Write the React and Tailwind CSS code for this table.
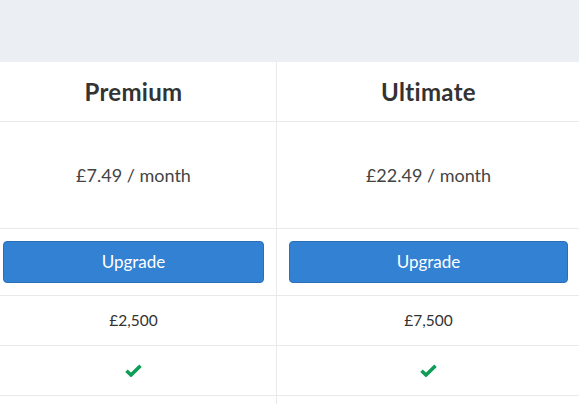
import React from "react";

function Check() {
  return (
    <svg width="17" height="13" viewBox="0 0 17 13" aria-hidden="true">
      <path d="M1.5 6.8 L6 11 L15.5 1.8" fill="none" stroke="#0f9d58" strokeWidth="3.6" strokeLinejoin="miter" />
    </svg>
  );
}

export default function App() {
  const font = { fontFamily: '"Lato", "Liberation Sans", sans-serif' };
  return (
    <div className="w-[579px] h-[404px] overflow-hidden bg-white text-[#333]" style={font}>
      <div className="h-[62px] bg-[#ebeef2]" />
      <div className="ml-[-9px] grid grid-cols-[286px_303px]">
        {/* header */}
        <div className="h-[60px] flex items-center justify-center border-r border-b border-[#e9e9e9] text-[24px] tracking-[0.3px] font-bold text-[#333]">Premium</div>
        <div className="h-[60px] flex items-center justify-center border-b border-[#e9e9e9] text-[24px] tracking-[0.3px] font-bold text-[#333]">Ultimate</div>
        {/* price */}
        <div className="h-[107px] flex items-center justify-center border-r border-b border-[#e9e9e9] text-[18px] text-[#444]">£7.49 / month</div>
        <div className="h-[107px] flex items-center justify-center border-b border-[#e9e9e9] text-[18px] text-[#444]">£22.49 / month</div>
        {/* buttons */}
        <div className="h-[67px] flex items-center px-[12px] border-r border-b border-[#e9e9e9]">
          <button className="w-full h-[42px] rounded-[4px] bg-[#3281d2] border border-[#2a70b8] text-white text-[17px] mb-[1px]">Upgrade</button>
        </div>
        <div className="h-[67px] flex items-center px-[12px] border-b border-[#e9e9e9]">
          <button className="w-full h-[42px] rounded-[4px] bg-[#3281d2] border border-[#2a70b8] text-white text-[17px] mb-[1px]">Upgrade</button>
        </div>
        {/* amount */}
        <div className="h-[50px] flex items-center justify-center border-r border-b border-[#e9e9e9] text-[15.5px] text-[#333]">£2,500</div>
        <div className="h-[50px] flex items-center justify-center border-b border-[#e9e9e9] text-[15.5px] text-[#333]">£7,500</div>
        {/* check */}
        <div className="h-[50px] flex items-center justify-center border-r border-b border-[#e9e9e9]"><Check /></div>
        <div className="h-[50px] flex items-center justify-center border-b border-[#e9e9e9]"><Check /></div>
        <div className="h-[50px] border-r border-[#e9e9e9]" />
        <div className="h-[50px]" />
      </div>
    </div>
  );
}
